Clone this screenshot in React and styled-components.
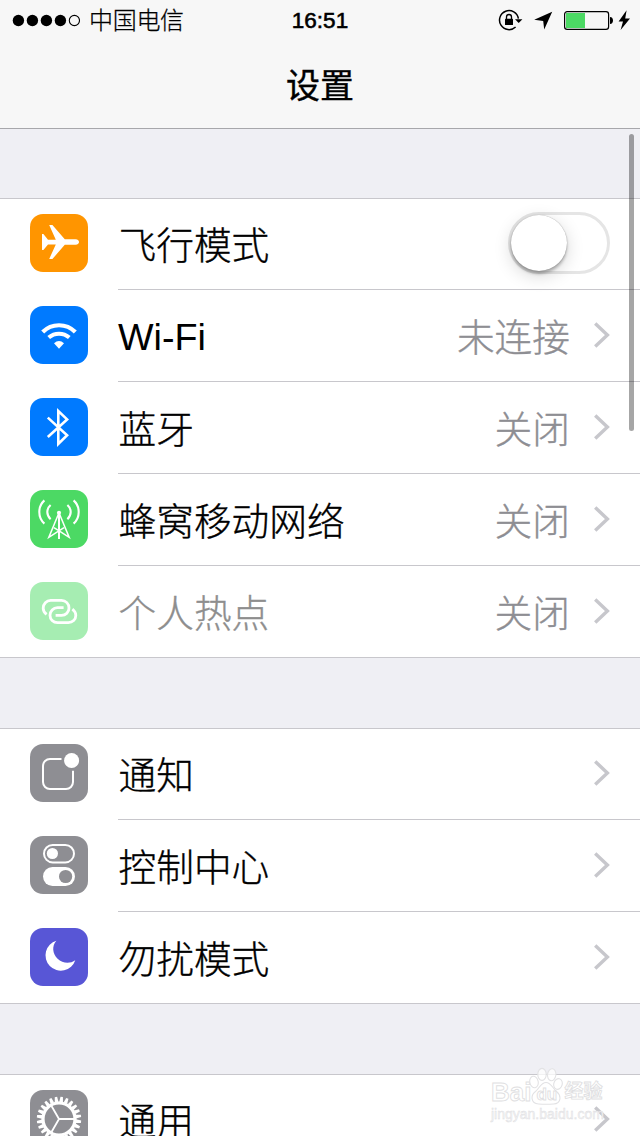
import React from "react";
import styled, { createGlobalStyle } from "styled-components";

const GlobalStyle = createGlobalStyle`
  * {
    box-sizing: border-box;
  }
  body {
    margin: 0;
    background: #efeff4;
    font-family: "Liberation Sans", "Noto Sans CJK SC", sans-serif;
    -webkit-font-smoothing: antialiased;
  }
`;

const Gear = () => {
  const teeth = Array.from({ length: 24 }, (_, i) => i * 15);
  return (
    <svg width="58" height="58" viewBox="0 0 58 58">
      <g transform="translate(29 29)" fill="#fff">
        {teeth.map((a) => (
          <path key={a} d="M-1.9 -17L-1.2 -22.2H1.2L1.9 -17Z" transform={`rotate(${a + 7})`} />
        ))}
        <circle r="16" fill="none" stroke="#fff" strokeWidth="3.2" />
        <path d="M0 0H15M0 0L-7.5 -13M0 0L-7.5 13" stroke="#fff" strokeWidth="1.8" />
      </g>
    </svg>
  );
};

const icons = {
  plane: (
    <svg width="58" height="58" viewBox="0 0 58 58" fill="#fff">
      <path d="M12 20H13.4L18 25.8H25.8L19.2 11H22.4L34.8 25.2H45.5C48 25.4 49 26.7 49 28S48 30.6 45.5 30.8H34.8L22.4 45H19.2L25.8 30.4H18L13.4 36H12Z" />
    </svg>
  ),
  wifi: (
    <svg width="58" height="58" viewBox="0 0 58 58" fill="none" stroke="#fff">
      <path d="M12.7 26A23 23 0 0 1 45.3 26" strokeWidth="4.2" />
      <path d="M18.7 31.6A15.6 15.6 0 0 1 39.3 31.6" strokeWidth="4" />
      <path d="M24 37.2Q29 33 34 37.2L29 42.8Z" fill="#fff" stroke="none" />
    </svg>
  ),
  bluetooth: (
    <svg width="58" height="58" viewBox="0 0 58 58" fill="none" stroke="#fff" strokeWidth="2.6">
      <path d="M17.8 19.6L37.1 37.2L28.3 45.9V13.1L37.1 21.4L17.8 39" />
    </svg>
  ),
  cellular: (
    <svg width="58" height="58" viewBox="0 0 58 58" fill="none" stroke="#fff" strokeWidth="1.5">
      <path d="M14.4 10.4C7.6 16.5 7.6 27.5 14.4 33.6M43.6 10.4C50.4 16.5 50.4 27.5 43.6 33.6" strokeWidth="2.1" />
      <path d="M20.6 15C16.2 19 16.2 25 20.6 29.2M37.4 15C41.8 19 41.8 25 37.4 29.2" strokeWidth="2.1" />
      <circle cx="29" cy="22.8" r="2.1" fill="#fff" stroke="none" />
      <path d="M29 23V49" strokeWidth="2" />
      <path d="M28.5 24L18.8 47.4L34 37.6M29.5 24L39.2 47.4L24 37.6" />
    </svg>
  ),
  hotspot: (
    <svg width="58" height="58" viewBox="0 0 58 58" fill="none" stroke="#fff" strokeWidth="2.8">
      <path d="M16.6 32.4C14.5 30.8 13.2 28.7 13.2 26.2C13.2 22 16.4 18.4 20.7 18.4H31.5C35.8 18.4 39 21.8 39 25.9S35.8 33.4 31.5 33.4H25.6" />
      <path d="M42.4 27.2C44.4 28.8 45.8 30.9 45.8 33.4C45.8 37.5 42.6 40.6 38.3 40.6H27.5C23.2 40.6 20 37.3 20 33.3S23.2 25.6 27.5 25.6H33.6" />
    </svg>
  ),
  notifications: (
    <svg width="58" height="58" viewBox="0 0 58 58" fill="none" stroke="#fff" strokeWidth="2">
      <path d="M31.5 15H20A7 7 0 0 0 13 22V38A7 7 0 0 0 20 45H36A7 7 0 0 0 43 38V26.8" />
      <circle cx="41.6" cy="16.5" r="7.5" fill="#fff" stroke="none" />
    </svg>
  ),
  control: (
    <svg width="58" height="58" viewBox="0 0 58 58">
      <rect x="14" y="9" width="30" height="17.4" rx="8.7" fill="none" stroke="#fff" strokeWidth="2" />
      <circle cx="22.4" cy="17.5" r="5.6" fill="#fff" />
      <rect x="13" y="31" width="32" height="19" rx="9.5" fill="#fff" />
      <circle cx="35.6" cy="40.5" r="6.6" fill="#8e8e93" />
    </svg>
  ),
  moon: (
    <svg width="58" height="58" viewBox="0 0 58 58" fill="#fff">
      <path d="M26.4 12.7A15.3 15.3 0 1 0 45.3 32.2C40 36 32.5 35.5 27.6 30.7C22.5 25.6 21.6 18 26.4 12.7Z" />
    </svg>
  ),
  gear: <Gear />,
};

const groups = [
  [
    { icon: "plane", color: "#ff9500", label: "飞行模式", toggle: true },
    { icon: "wifi", color: "#007aff", label: "Wi-Fi", value: "未连接" },
    { icon: "bluetooth", color: "#007aff", label: "蓝牙", value: "关闭" },
    { icon: "cellular", color: "#4cd964", label: "蜂窝移动网络", value: "关闭" },
    { icon: "hotspot", color: "#a6edb2", label: "个人热点", value: "关闭", disabled: true },
  ],
  [
    { icon: "notifications", color: "#8e8e93", label: "通知" },
    { icon: "control", color: "#8e8e93", label: "控制中心" },
    { icon: "moon", color: "#5856d6", label: "勿扰模式" },
  ],
  [{ icon: "gear", color: "#8e8e93", label: "通用" }],
];

const Chevron = () => (
  <svg width="17" height="26" viewBox="0 0 17 26" fill="none" stroke="#c7c7cc" strokeWidth="3.4">
    <path d="M2.2 1.4L14.4 13L2.2 24.6" />
  </svg>
);

const Row = ({ item }) => (
  <RowWrap>
    <IconBox $color={item.color}>{icons[item.icon]}</IconBox>
    <RowBody>
      <Label $disabled={item.disabled} $latin={item.label === "Wi-Fi"}>
        {item.label}
      </Label>
      {item.value && <Value>{item.value}</Value>}
      {item.toggle ? (
        <Switch>
          <Knob />
        </Switch>
      ) : (
        <Chevron />
      )}
    </RowBody>
  </RowWrap>
);

const App = () => {
  return (
    <Screen>
      <GlobalStyle />
      <Header>
        <StatusBar>
          <Carrier>
            <svg width="68" height="14" viewBox="0 0 68 14">
              {[6, 20, 34, 48].map((x) => (
                <circle key={x} cx={x + 0.4} cy="7.5" r="5.7" />
              ))}
              <circle cx="62.4" cy="7.5" r="5.1" fill="none" stroke="#000" strokeWidth="1.1" />
            </svg>
            <span>中国电信</span>
          </Carrier>
          <Time>16:51</Time>
          <StatusIcons>
            <svg width="133" height="24" viewBox="0 0 133 24">
              {/* rotation lock */}
              <path d="M17.6 19A9.5 9.5 0 1 1 20.4 10.6" fill="none" stroke="#000" strokeWidth="1.5" />
              <path d="M17 11.2H24.4L20.7 15Z" />
              <rect x="7" y="10.8" width="8" height="6.2" rx="0.6" />
              <path d="M8.5 11.3V9A2.5 2.5 0 0 1 13.5 9V11.3" fill="none" stroke="#000" strokeWidth="1.3" />
              {/* location */}
              <path d="M54.2 3.8L46.2 21.6L45.2 12.9L36.2 11.7Z" />
              {/* battery */}
              <rect x="66.6" y="3.6" width="44" height="17.8" rx="2.6" fill="none" stroke="#000" strokeWidth="1.2" />
              <rect x="68" y="5" width="19" height="15" fill="#4cd964" />
              <path d="M112 9C114 9 115 10.6 115 12.5S114 16 112 16Z" />
              <path d="M128.6 2.2L120.6 13.4H125L122.6 22L132 10.4H127.2Z" />
            </svg>
          </StatusIcons>
        </StatusBar>
        <Title>设置</Title>
      </Header>
      <List>
        {groups.map((rows, i) => (
          <Group key={i}>
            {rows.map((item) => (
              <Row key={item.label} item={item} />
            ))}
          </Group>
        ))}
      </List>
      <ScrollBar />
      <Watermark>
        <WatermarkTop>
          <span>Bai</span>
          <Paw>
            <svg width="34" height="38" viewBox="0 0 34 38" fill="rgba(255,255,255,0.75)" stroke="#e2e2e4" strokeWidth="1.1">
              <ellipse cx="5" cy="15" rx="4.2" ry="5.8" transform="rotate(-12 5 15)" />
              <ellipse cx="13" cy="7.4" rx="4.2" ry="6" />
              <ellipse cx="22.8" cy="7.6" rx="4.2" ry="6" transform="rotate(8 22 7)" />
              <ellipse cx="29" cy="17" rx="4.2" ry="5.4" transform="rotate(16 29 17)" />
              <path d="M17 15.5C12 15.5 10.5 21 6.5 24.5C1.5 28 1.5 36.5 9.5 37C14 37.3 20 37.3 24.5 37C32.5 36.5 32.5 28.5 27.5 24.5C23.5 21 22 15.5 17 15.5Z" />
            </svg>
            <PawText>du</PawText>
          </Paw>
          <span>经验</span>
        </WatermarkTop>
        <WatermarkUrl>jingyan.baidu.com</WatermarkUrl>
      </Watermark>
    </Screen>
  );
};

export default App;

const Screen = styled.div`
  position: relative;
  width: 640px;
  height: 1136px;
  overflow: hidden;
  background: #efeff4;
  color: #000;
`;

const Header = styled.header`
  height: 129px;
  background: #f7f7f7;
  border-bottom: 1px solid #a7a7ab;
`;

const StatusBar = styled.div`
  display: grid;
  grid-template-columns: 1fr auto 1fr;
  align-items: center;
  height: 40px;
  padding: 0 9px 0 12px;
`;

const Carrier = styled.div`
  display: flex;
  align-items: center;
  gap: 9px;
  font-size: 24px;
  font-weight: 300;
  line-height: 38px;
  letter-spacing: -0.3px;
  -webkit-text-stroke: 0.25px #000;

  span {
    padding-top: 2px;
  }
`;

const Time = styled.div`
  margin-right: 3px;
  padding-top: 2px;
  font-size: 22.5px;
  line-height: 38px;
  -webkit-text-stroke: 0.6px #000;
`;

const StatusIcons = styled.div`
  display: flex;
  justify-content: flex-end;
`;

const Title = styled.h1`
  margin: 0;
  font-size: 34px;
  font-weight: 400;
  line-height: 93px;
  text-align: center;
  -webkit-text-stroke: 0.4px #000;
`;

const List = styled.main`
  display: flex;
  flex-direction: column;
  gap: 70px;
  padding-top: 69px;
`;

const RowBody = styled.div`
  display: flex;
  flex: 1;
  align-items: center;
  height: 92px;
  padding: 0 30px 2px 0;
  border-bottom: 1px solid #c8c7cc;
`;

const RowWrap = styled.div`
  display: flex;
  align-items: flex-start;
  padding-left: 30px;
`;

const Group = styled.section`
  background: #fff;
  box-shadow: inset 0 1px 0 #c8c7cc, inset 0 -1px 0 #c8c7cc;

  ${RowWrap}:last-child ${RowBody} {
    border-bottom-color: transparent;
  }
`;

const IconBox = styled.div`
  width: 58px;
  height: 58px;
  margin: 16px 30px 0 0;
  border-radius: 13px;
  background: ${(props) => props.$color};

  svg {
    display: block;
  }
`;

const Label = styled.div`
  flex: 1;
  padding: ${(props) => (props.$latin ? "4px 0 0 0" : "7px 0 0 0.5px")};
  font-size: 37.7px;
  font-weight: 300;
  line-height: 82px;
  color: ${(props) => (props.$disabled ? "#8e8e8e" : "#000")};
  -webkit-text-stroke: ${(props) => (props.$latin ? "0" : "0.35px")};
`;

const Value = styled.div`
  margin-right: 23px;
  padding-top: 7px;
  font-size: 37.7px;
  font-weight: 300;
  line-height: 82px;
  color: #8e8e93;
  -webkit-text-stroke: 0.35px;
`;

const Switch = styled.div`
  width: 102px;
  height: 62px;
  padding: 0;
  border: 3px solid #e5e5e5;
  border-radius: 31px;
`;

const Knob = styled.div`
  width: 56px;
  height: 56px;
  border-radius: 50%;
  background: #fff;
  box-shadow: 0 0 1px rgba(0, 0, 0, 0.4), 0 3px 3px rgba(0, 0, 0, 0.25), 0 5px 18px rgba(0, 0, 0, 0.16);
`;

const ScrollBar = styled.div`
  position: absolute;
  top: 134px;
  right: 6px;
  width: 5px;
  height: 297px;
  border-radius: 3px;
  background: rgba(0, 0, 0, 0.35);
`;

const Watermark = styled.div`
  position: absolute;
  left: 491px;
  top: 1067px;
  width: 116px;
  color: #fff;
  font-weight: 700;
  -webkit-text-stroke: 0.9px #dfdfe2;
`;

const WatermarkTop = styled.div`
  display: flex;
  align-items: flex-end;
  height: 38px;
  font-size: 26px;
  line-height: 26px;

  span:last-child {
    font-size: 19px;
  }
`;

const Paw = styled.div`
  position: relative;
  width: 34px;
  height: 38px;
  margin: 0 1px 0 -2px;
`;

const PawText = styled.b`
  position: absolute;
  left: 7px;
  bottom: 0;
  font-size: 17px;
  line-height: 20px;
`;

const WatermarkUrl = styled.div`
  font-size: 14px;
  font-weight: 400;
  line-height: 18px;
  color: #f4f4f5;
  -webkit-text-stroke: 0.4px #dcdce0;
`;
